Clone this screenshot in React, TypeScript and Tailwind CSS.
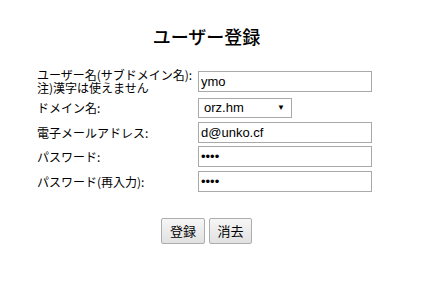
import { useState } from 'react';

const jp = "font-['Noto_Sans_CJK_JP',sans-serif]";

function Row({ label, h, children }: { label: React.ReactNode; h: string; children: React.ReactNode }) {
  return (
    <div className={`flex items-center ${h}`}>
      <div className={`w-[161px] text-[12px] leading-[13px] text-black ${jp}`}>{label}</div>
      {children}
    </div>
  );
}

export default function App() {
  const [name, setName] = useState('ymo');
  const [mail, setMail] = useState('d@unko.cf');
  const [pw, setPw] = useState('abcd');
  const [pw2, setPw2] = useState('abcd');

  const inputCls =
    "w-[174px] h-[21px] border border-[#a9a9a9] bg-white px-[2px] text-[13px] text-black font-['Liberation_Sans',Arial,sans-serif] outline-none";

  return (
    <div className="w-[433px] h-[282px] bg-white">
      <div className="w-[413px] pt-[24px]">
        <h1 className={`text-center text-[18px] leading-[24px] font-medium text-black ${jp}`}>ユーザー登録</h1>

        <div className="mt-[19px] ml-[37px] flex flex-col">
          <Row
            h="h-[28px]"
            label={
              <div className="flex flex-col">
                <div className="h-[13px] overflow-visible">ユーザー名(サブドメイン名):</div>
                <div className="h-[13px] overflow-visible">注)漢字は使えません</div>
              </div>
            }
          >
            <input className={inputCls} value={name} onChange={(e) => setName(e.target.value)} />
          </Row>
          <Row h="h-[25px]" label="ドメイン名:">
            <div className="relative w-[94px] h-[20px] border border-[#a9a9a9] bg-white flex items-center pl-[5px] text-[13px] text-black font-['Liberation_Sans',Arial,sans-serif]">
              orz.hm
              <span className="absolute right-[6px] top-[4px] text-[8px] leading-[10px]">▼</span>
            </div>
          </Row>
          <Row h="h-[24px]" label="電子メールアドレス:">
            <input className={inputCls} value={mail} onChange={(e) => setMail(e.target.value)} />
          </Row>
          <Row h="h-[25px]" label="パスワード:">
            <input type="password" className={inputCls} value={pw} onChange={(e) => setPw(e.target.value)} />
          </Row>
          <Row h="h-[24px]" label="パスワード(再入力):">
            <input type="password" className={inputCls} value={pw2} onChange={(e) => setPw2(e.target.value)} />
          </Row>
        </div>

        <div className="mt-[25px] flex justify-center gap-[4px]">
          <button className={`w-[44px] h-[26px] border border-[#adadad] rounded-[2px] bg-gradient-to-b from-[#f6f6f6] to-[#e1e1e1] text-[13px] text-black ${jp}`}>
            登録
          </button>
          <button className={`w-[43px] h-[26px] border border-[#adadad] rounded-[2px] bg-gradient-to-b from-[#f6f6f6] to-[#e1e1e1] text-[13px] text-black ${jp}`}>
            消去
          </button>
        </div>
      </div>
    </div>
  );
}
